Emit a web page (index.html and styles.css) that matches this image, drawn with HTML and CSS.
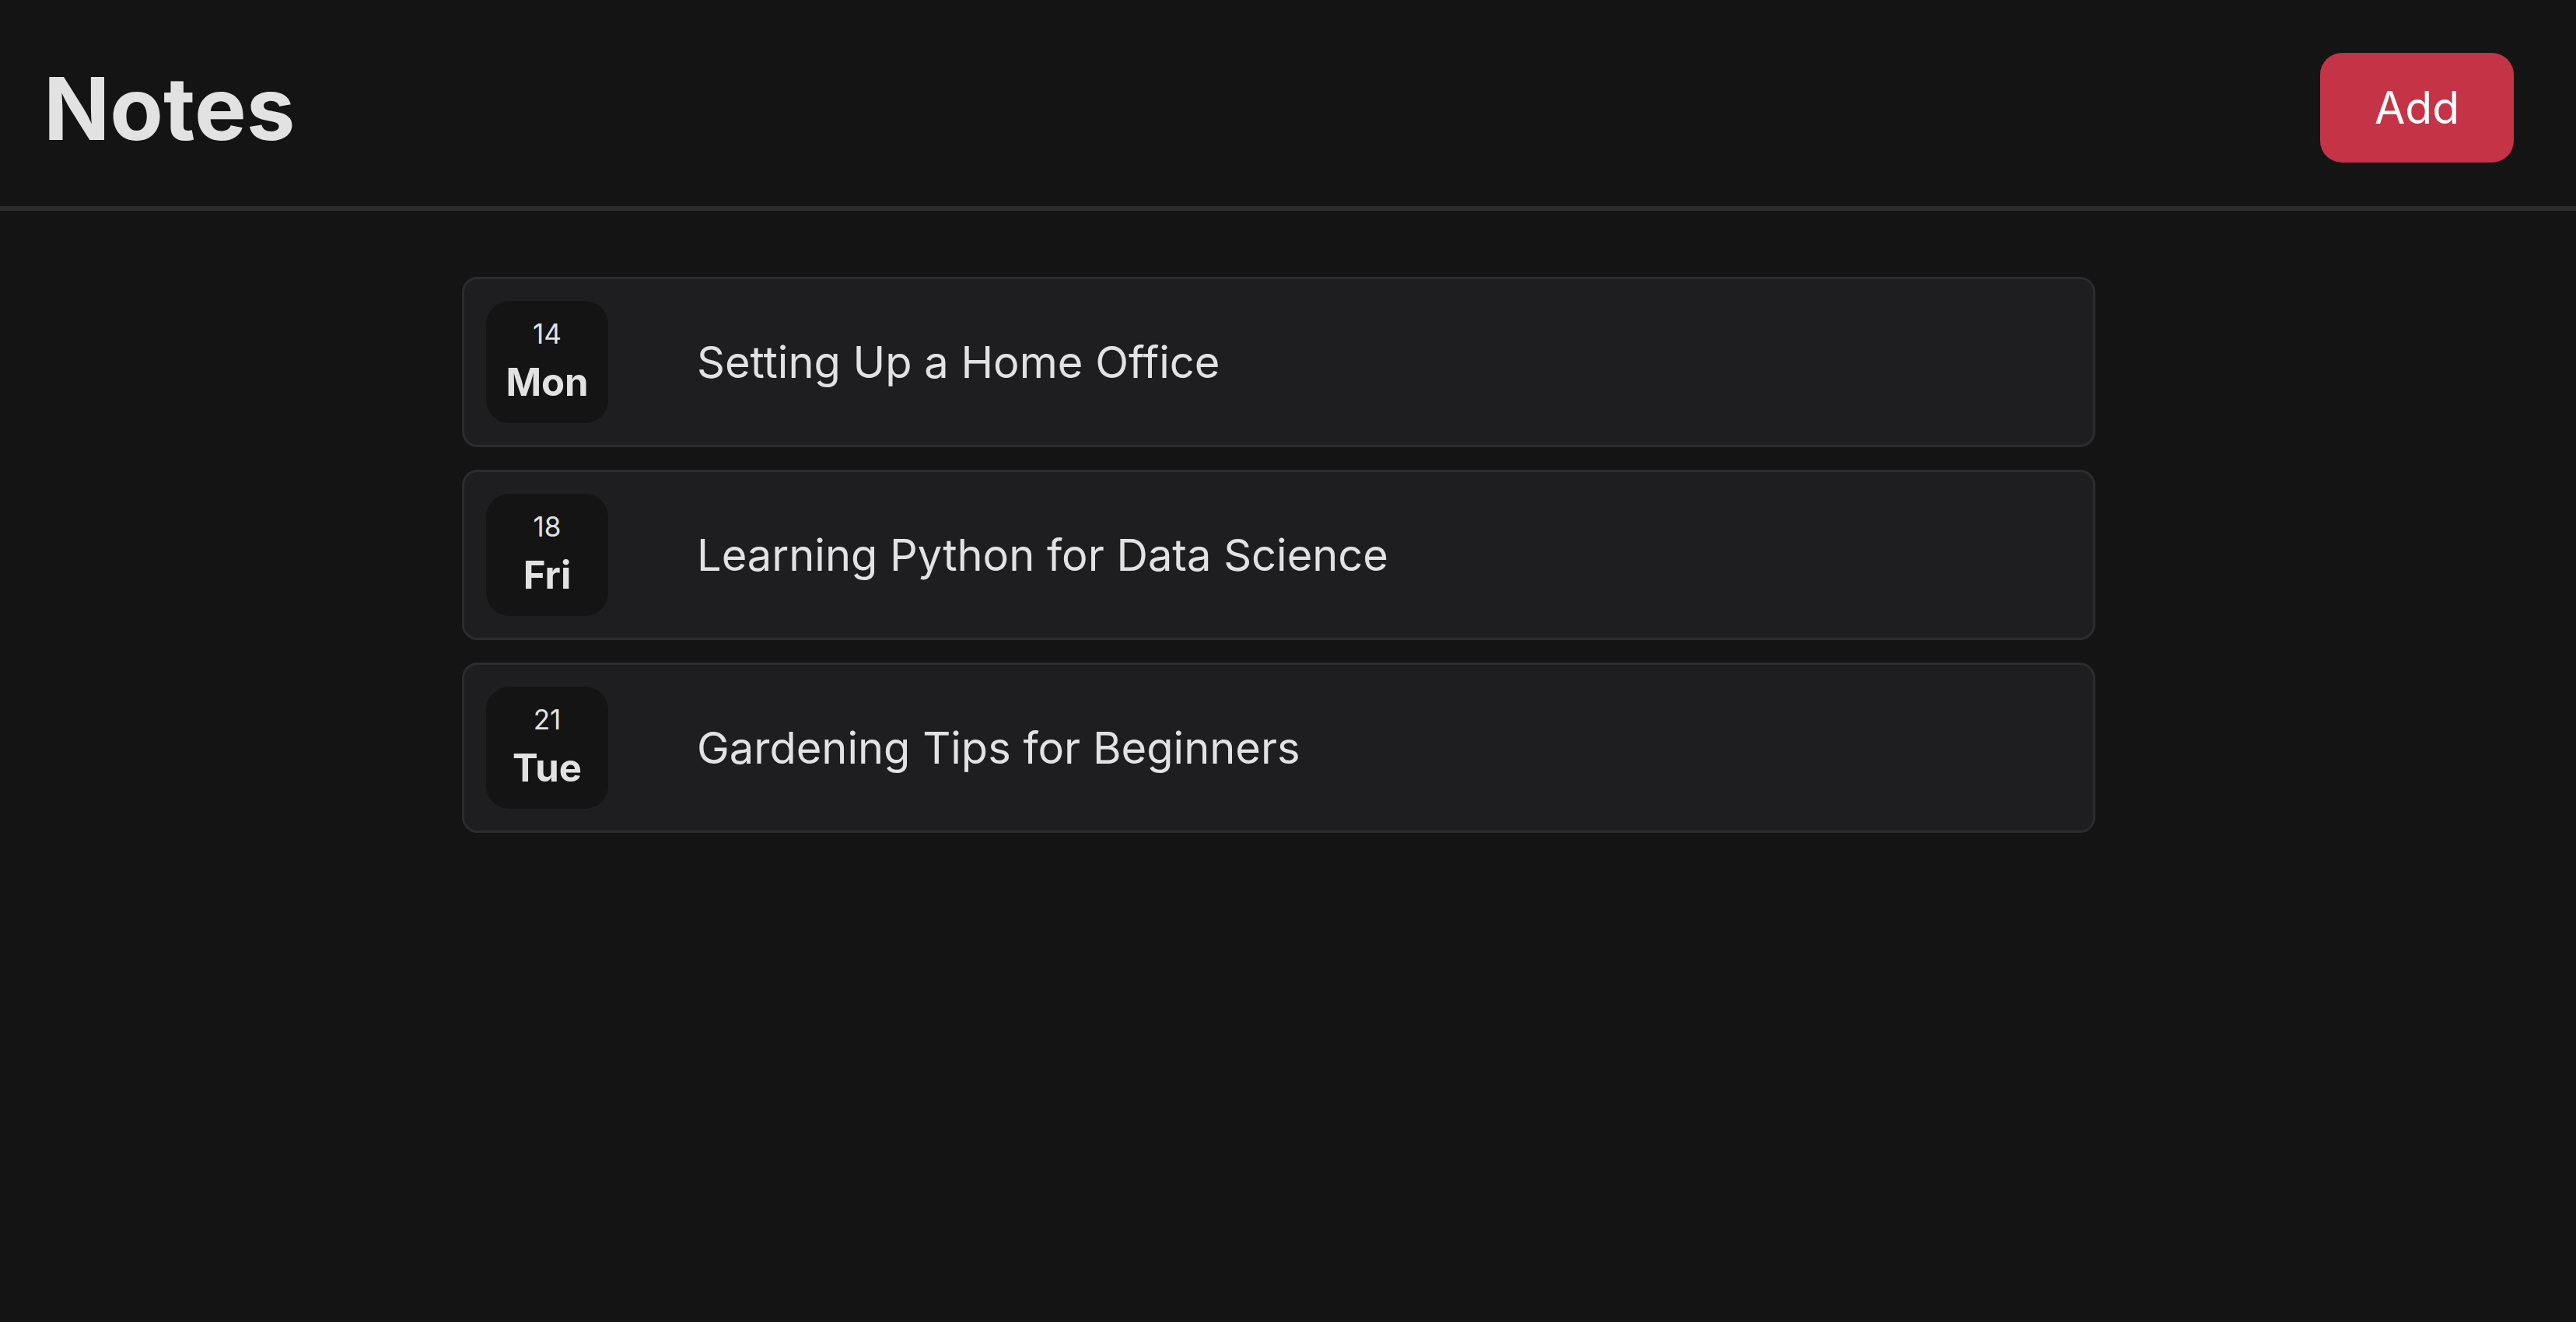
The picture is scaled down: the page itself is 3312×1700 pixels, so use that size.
FILE: index.html
```html
<!DOCTYPE html>
<html lang="en">
<head>
<meta charset="utf-8">
<title>Notes</title>
<link rel="stylesheet" href="styles.css">
</head>
<body>
<header class="topbar">
  <h1 class="title">Notes</h1>
  <button class="add-btn">Add</button>
</header>
<main class="list">
  <div class="note">
    <div class="date"><span class="day-num">14</span><span class="day-name">Mon</span></div>
    <div class="note-title">Setting Up a Home Office</div>
  </div>
  <div class="note">
    <div class="date"><span class="day-num">18</span><span class="day-name">Fri</span></div>
    <div class="note-title">Learning Python for Data Science</div>
  </div>
  <div class="note">
    <div class="date"><span class="day-num">21</span><span class="day-name">Tue</span></div>
    <div class="note-title">Gardening Tips for Beginners</div>
  </div>
</main>
</body>
</html>
```

FILE: styles.css
```css
* { box-sizing: border-box; }
html, body {
  margin: 0;
  padding: 0;
  background: #141414;
  color: #e2e2e2;
  font-family: Inter, "Noto Sans", sans-serif;
}
body { min-height: 100vh; }

.topbar {
  height: 271px;
  padding: 12px 80px 0 56px;
  border-bottom: 6px solid #2c2c2e;
  display: flex;
  align-items: center;
  justify-content: space-between;
}
.title {
  margin: 0;
  font-size: 112px;
  line-height: 1;
  font-weight: 700;
  color: #e2e2e2;
}
.add-btn {
  width: 249px;
  height: 141px;
  border: none;
  border-radius: 28px;
  background: #c43346;
  color: #ffffff;
  font-family: Inter, "Noto Sans", sans-serif;
  font-size: 57px;
  line-height: 1;
  padding: 0;
}

.list {
  width: 2124px;
  padding-right: 24px;
  margin: 85px auto 0;
  display: flex;
  flex-direction: column;
  gap: 29px;
}
.note {
  height: 219px;
  display: flex;
  align-items: center;
  gap: 114px;
  padding: 0 28px;
  background: #1e1e20;
  border: 3px solid #2c2c2e;
  border-radius: 20px;
}
.date {
  width: 157px;
  height: 157px;
  flex: none;
  border-radius: 30px;
  background: #141414;
  display: flex;
  flex-direction: column;
  align-items: center;
  justify-content: center;
}
.day-num {
  font-size: 35px;
  line-height: 1.5;
  color: #e2e2e2;
}
.day-name {
  font-size: 49px;
  line-height: 1.47;
  font-weight: 700;
  color: #e2e2e2;
}
.note-title {
  font-size: 56px;
  line-height: 1.5;
  color: #e2e2e2;
}
```
